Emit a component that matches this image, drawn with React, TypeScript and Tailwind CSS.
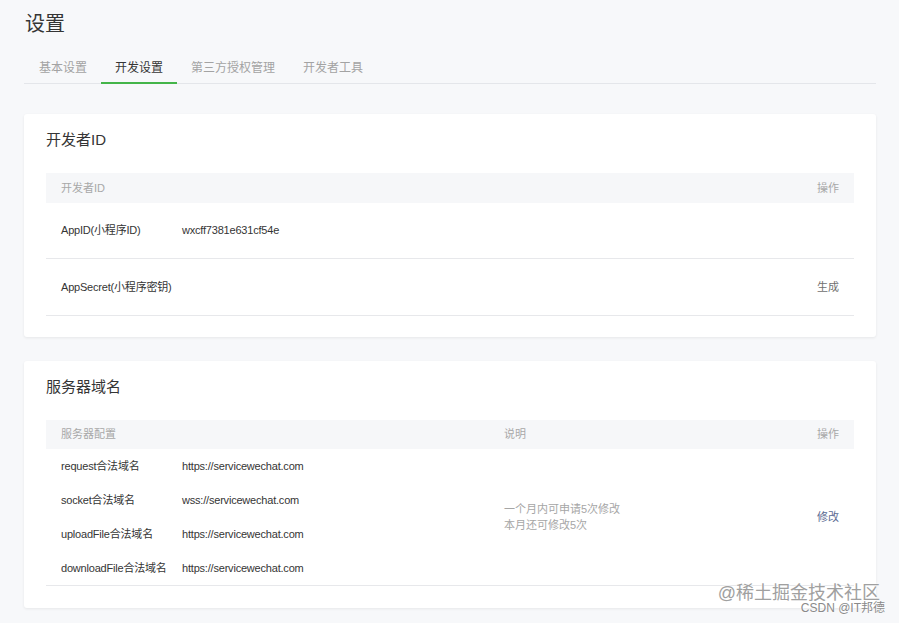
import React from 'react'

const tabs = ['基本设置', '开发设置', '第三方授权管理', '开发者工具']

const domains = [
  { label: 'request合法域名', value: 'https://servicewechat.com' },
  { label: 'socket合法域名', value: 'wss://servicewechat.com' },
  { label: 'uploadFile合法域名', value: 'https://servicewechat.com' },
  { label: 'downloadFile合法域名', value: 'https://servicewechat.com' },
]

function Card({ title, children }: { title: string; children: React.ReactNode }) {
  return (
    <div className="bg-white rounded-[3px] shadow-[0_1px_3px_rgba(0,0,0,0.07)] px-[22px] pt-[16px]">
      <h2 className="text-[15px] leading-[20px] text-[#353535] font-normal">{title}</h2>
      <div className="mt-[23px]">{children}</div>
    </div>
  )
}

export default function App() {
  return (
    <div
      className="relative w-[899px] h-[623px] overflow-hidden bg-[#f7f8fa] pl-[24px] pr-[23px] pt-[10px] text-[#353535]"
      style={{ fontFamily: '"Liberation Sans", "Noto Sans CJK SC", sans-serif' }}
    >
      {/* page title */}
      <h1 className="text-[20px] leading-[28px] font-normal pl-px">设置</h1>

      {/* tabs */}
      <div className="mt-[16px] flex border-b border-[#e4e6ea] pl-px">
        {tabs.map((t, i) => (
          <div
            key={t}
            className={`h-[30px] px-[14px] flex items-center text-[12px] -mb-px ${
              i === 1 ? 'text-[#353535] border-b-2 border-[#44b549]' : 'text-[#a3a3a3] border-b-2 border-transparent'
            }`}
          >
            {t}
          </div>
        ))}
      </div>

      <div className="mt-[30px] flex flex-col gap-[24px]">
        {/* developer id */}
        <Card title="开发者ID">
          <div className="h-[30px] bg-[#f6f7f9] flex items-center justify-between px-[15px] text-[11px] text-[#a8a8a8]">
            <span>开发者ID</span>
            <span>操作</span>
          </div>
          <div className="h-[56px] flex items-center pl-[15px] text-[11px] tracking-[-0.2px] border-b border-[#e7e8eb]">
            <span className="w-[121px]">AppID(小程序ID)</span>
            <span>wxcff7381e631cf54e</span>
          </div>
          <div className="h-[57px] flex items-center justify-between px-[15px] text-[11px] tracking-[-0.2px] border-b border-[#e7e8eb]">
            <span>AppSecret(小程序密钥)</span>
            <span className="text-[#707070] tracking-normal">生成</span>
          </div>
          <div className="h-[21px]" />
        </Card>

        {/* server domains */}
        <Card title="服务器域名">
          <div className="h-[29px] bg-[#f6f7f9] flex items-center text-[11px] text-[#a8a8a8]">
            <span className="w-[443px] pl-[15px]">服务器配置</span>
            <span className="flex-1 pl-[15px]">说明</span>
            <span className="pr-[15px]">操作</span>
          </div>
          <div className="flex border-b border-[#e7e8eb] text-[11px]">
            <div className="w-[443px] flex flex-col">
              {domains.map((d) => (
                <div key={d.label} className="h-[34px] flex items-center pl-[15px] tracking-[-0.2px]">
                  <span className="w-[121px]">{d.label}</span>
                  <span>{d.value}</span>
                </div>
              ))}
            </div>
            <div className="flex-1 flex flex-col justify-center pl-[15px] leading-[16px] text-[#a6a6a6]">
              <span>一个月内可申请5次修改</span>
              <span>本月还可修改5次</span>
            </div>
            <div className="flex items-center pr-[15px] text-[#5b6a92]">修改</div>
          </div>
          <div className="h-[22px]" />
        </Card>
      </div>

      {/* watermark */}
      <div className="absolute right-[19px] bottom-[20px] text-[18px] leading-[20px] text-[#a0a0a0] [text-shadow:0_0_2px_#fff,0_0_2px_#fff]">
        @稀土掘金技术社区
      </div>
      <div className="absolute right-[14px] bottom-[8px] text-[12px] leading-[14px] text-[#8a8a8a] [text-shadow:0_0_2px_#fff,0_0_2px_#fff]">
        CSDN @IT邦德
      </div>
    </div>
  )
}
